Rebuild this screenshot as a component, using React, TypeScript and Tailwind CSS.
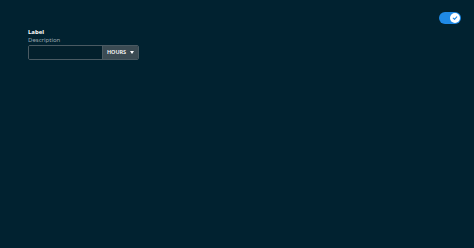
import React from "react";

export default function App() {
  return (
    <div className="w-[474px] h-[248px] bg-[#012230] relative" style={{ fontFamily: "'Noto Sans', sans-serif" }}>
      <div className="absolute right-[13px] top-[12px] w-[22px] h-[12px] rounded-full bg-[#1f8ae6] flex items-center justify-end pr-[1px]">
        <div className="w-[10px] h-[10px] rounded-full bg-white flex items-center justify-center">
          <svg width="6" height="6" viewBox="0 0 10 10">
            <path d="M2 5.2 L4.2 7.3 L8 3" stroke="#1f8ae6" strokeWidth="1.8" fill="none" strokeLinecap="round" strokeLinejoin="round" />
          </svg>
        </div>
      </div>
      <div className="pt-[28px] pl-[28px] flex flex-col">
        <div className="text-[6px] leading-[8px] font-bold text-white">Label</div>
        <div className="text-[6px] leading-[8px] text-[#9aa8b0]">Description</div>
        <div className="mt-[1px] flex w-[111px] h-[15px] rounded-[2px] border border-[#4a5a62] overflow-hidden">
          <div className="flex-1 bg-[#03202c]"></div>
          <div className="w-[36px] bg-[#3b4b53] border-l border-[#4a5a62] flex items-center justify-center gap-[4px]">
            <span className="text-[5.5px] font-semibold text-white">HOURS</span>
            <svg width="4" height="3" viewBox="0 0 4 3"><path d="M0 0 L4 0 L2 3 Z" fill="white" /></svg>
          </div>
        </div>
      </div>
    </div>
  );
}
